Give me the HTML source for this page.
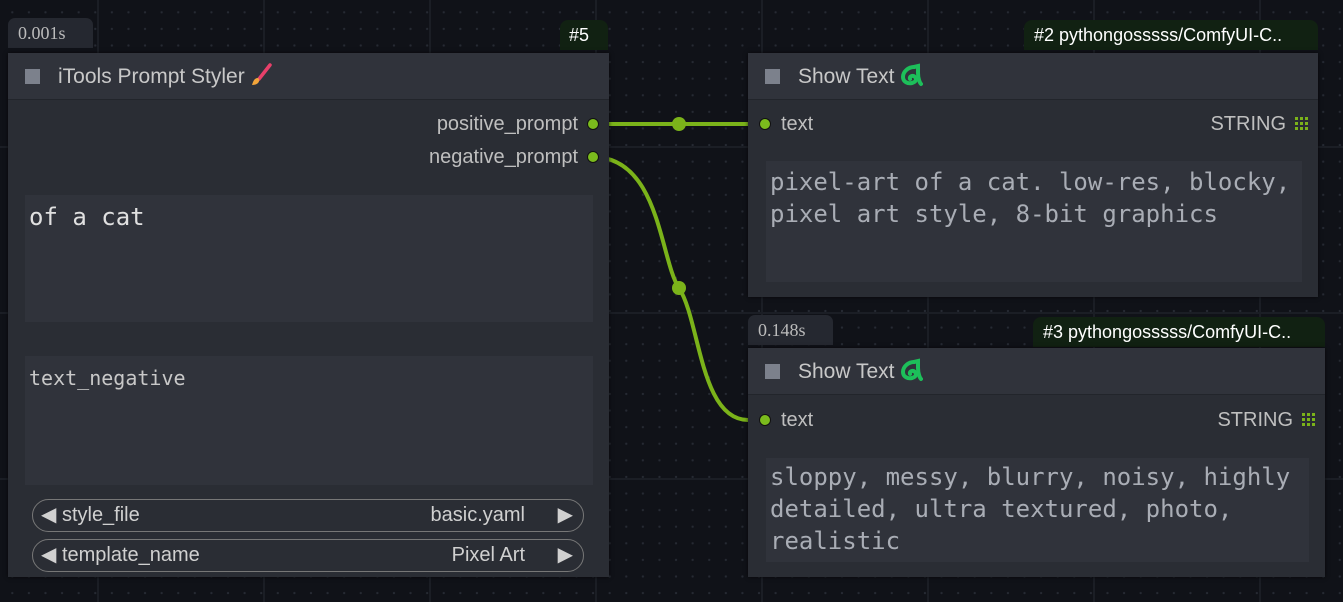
<!DOCTYPE html>
<html><head><style>
*{margin:0;padding:0;box-sizing:border-box}
body{width:1343px;height:602px;overflow:hidden;position:relative;font-family:"Liberation Sans",sans-serif;
background-color:#101218;
background-image:
linear-gradient(90deg,#1b1e25 2px,transparent 2px),
linear-gradient(0deg,#1b1e25 2px,transparent 2px),
radial-gradient(circle,#262a33 1px,transparent 1.3px);
background-size:166px 166px,166px 166px,16.6px 16.6px;
background-position:97px 0,0 148px,4px 4px}
.a{position:absolute}
.node{position:absolute;background:#2a2d34;box-shadow:0 0 4px #000a}
.title{position:absolute;left:0;right:0;top:0;height:47px;background:#30333b;border-bottom:1px solid #22252b;color:#c8c8c8;font-size:21px;line-height:47px;padding-left:50px}
.sq{position:absolute;left:17px;top:16px;width:15px;height:15px;background:#7c818c}
.badge{position:absolute;height:30px;border-radius:7px 7px 0 0;font-size:18px;line-height:30px;padding:0 10px}
.time{background:#252830;color:#bbb;font-family:"Liberation Serif",serif}
.id{background:#112112;color:#fff;border-radius:8px 8px 0 0}
.ta{position:absolute;background:#30333b;font-family:"DejaVu Sans Mono",monospace;font-size:24px;line-height:32px;padding:4px 4px;color:#a9adb5}
.lbl{position:absolute;color:#bfbfbf;font-size:20px}
.dot{position:absolute;width:12px;height:12px;border-radius:50%;background:#7bbb1d;border:1px solid #111}
.combo{position:absolute;left:24px;width:552px;height:33px;border:1.5px solid #777;border-radius:17px;background:#2a2d34;color:#d0d0d0;font-size:20px;line-height:30px}
.ic{vertical-align:-4px;margin-left:4px}
.grid{position:absolute;width:13px;height:13px;background:repeating-linear-gradient(90deg,#7bb31a 0 3px,transparent 3px 5px);-webkit-mask:repeating-linear-gradient(0deg,#000 0 3px,transparent 3px 5px)}
</style></head><body>
<svg class="a" style="left:0;top:0" width="1343" height="602">
<path d="M593 124 L748 124" stroke="#7bb31a" stroke-width="4" fill="none"/>
<path d="M593 157 C 660 157 660 260 679 288 C 700 320 700 420 748 420" stroke="#7bb31a" stroke-width="4" fill="none"/>
<circle cx="679" cy="124" r="7" fill="#7bb31a"/>
<circle cx="679" cy="288" r="7" fill="#7bb31a"/>
</svg>

<div class="badge time" style="left:8px;top:18px;width:85px">0.001s</div>
<div class="badge id" style="left:560px;top:20px;width:48px;padding:0 9px">#5</div>
<div class="node" style="left:8px;top:53px;width:601px;height:524px">
<div class="title"><div class="sq"></div>iTools Prompt Styler<svg class="ic" width="24" height="24" viewBox="0 0 24 24"><path d="M21 2 L10 16" stroke="#e8406a" stroke-width="3.5" stroke-linecap="round"/><path d="M9 15 C5 15 4 19 3 22 C7 22 11 20 10 16Z" fill="#f4a53a"/></svg></div>
<div class="lbl" style="right:31px;top:60px">positive_prompt</div>
<div class="dot" style="left:579px;top:65px"></div>
<div class="lbl" style="right:31px;top:93px">negative_prompt</div>
<div class="dot" style="left:579px;top:98px"></div>
<div class="ta" style="left:17px;top:142px;width:568px;height:127px;color:#e0e0e0;padding-top:6px">of a cat</div>
<div class="ta" style="left:17px;top:303px;width:568px;height:129px;font-size:20px;color:#c8c8c8;padding-top:6px">text_negative</div>
<div class="combo" style="top:446px"><span style="position:absolute;left:8px">◀ style_file</span><span style="position:absolute;right:58px">basic.yaml</span><span style="position:absolute;right:10px">▶</span></div>
<div class="combo" style="top:486px"><span style="position:absolute;left:8px">◀ template_name</span><span style="position:absolute;right:58px">Pixel Art</span><span style="position:absolute;right:10px">▶</span></div>
</div>

<div class="badge id" style="left:1024px;top:20px;width:294px">#2 pythongosssss/ComfyUI-C..</div>
<div class="node" style="left:748px;top:53px;width:570px;height:244px">
<div class="title"><div class="sq"></div>Show Text<svg class="ic" width="24" height="24" viewBox="0 0 24 24"><path d="M15 4 C10 4 4 8 4 14 C4 19 9 21 13 20 C17 19 18 16 16 14 C14 12 10 13 11 16" stroke="#1dbf5a" stroke-width="4" fill="none" stroke-linecap="round"/><path d="M15 4 L19 3 L19 10 C19 16 21 20 22 21" stroke="#1dbf5a" stroke-width="4" fill="none" stroke-linecap="round"/></svg></div>
<div class="dot" style="left:11px;top:65px"></div>
<div class="lbl" style="left:33px;top:60px">text</div>
<div class="lbl" style="right:32px;top:60px">STRING</div>
<div class="grid" style="right:10px;top:64px"></div>
<div class="ta" style="left:18px;top:108px;width:536px;height:121px;padding-top:5px">pixel-art of a cat. low-res, blocky,<br>pixel art style, 8-bit graphics</div>
</div>

<div class="badge time" style="left:748px;top:315px;width:85px">0.148s</div>
<div class="badge id" style="left:1033px;top:317px;width:292px">#3 pythongosssss/ComfyUI-C..</div>
<div class="node" style="left:748px;top:348px;width:577px;height:229px">
<div class="title"><div class="sq"></div>Show Text<svg class="ic" width="24" height="24" viewBox="0 0 24 24"><path d="M15 4 C10 4 4 8 4 14 C4 19 9 21 13 20 C17 19 18 16 16 14 C14 12 10 13 11 16" stroke="#1dbf5a" stroke-width="4" fill="none" stroke-linecap="round"/><path d="M15 4 L19 3 L19 10 C19 16 21 20 22 21" stroke="#1dbf5a" stroke-width="4" fill="none" stroke-linecap="round"/></svg></div>
<div class="dot" style="left:11px;top:66px"></div>
<div class="lbl" style="left:33px;top:61px">text</div>
<div class="lbl" style="right:32px;top:61px">STRING</div>
<div class="grid" style="right:10px;top:65px"></div>
<div class="ta" style="left:18px;top:110px;width:543px;height:104px;padding-top:3px">sloppy, messy, blurry, noisy, highly<br>detailed, ultra textured, photo,<br>realistic</div>
</div>
</body></html>
